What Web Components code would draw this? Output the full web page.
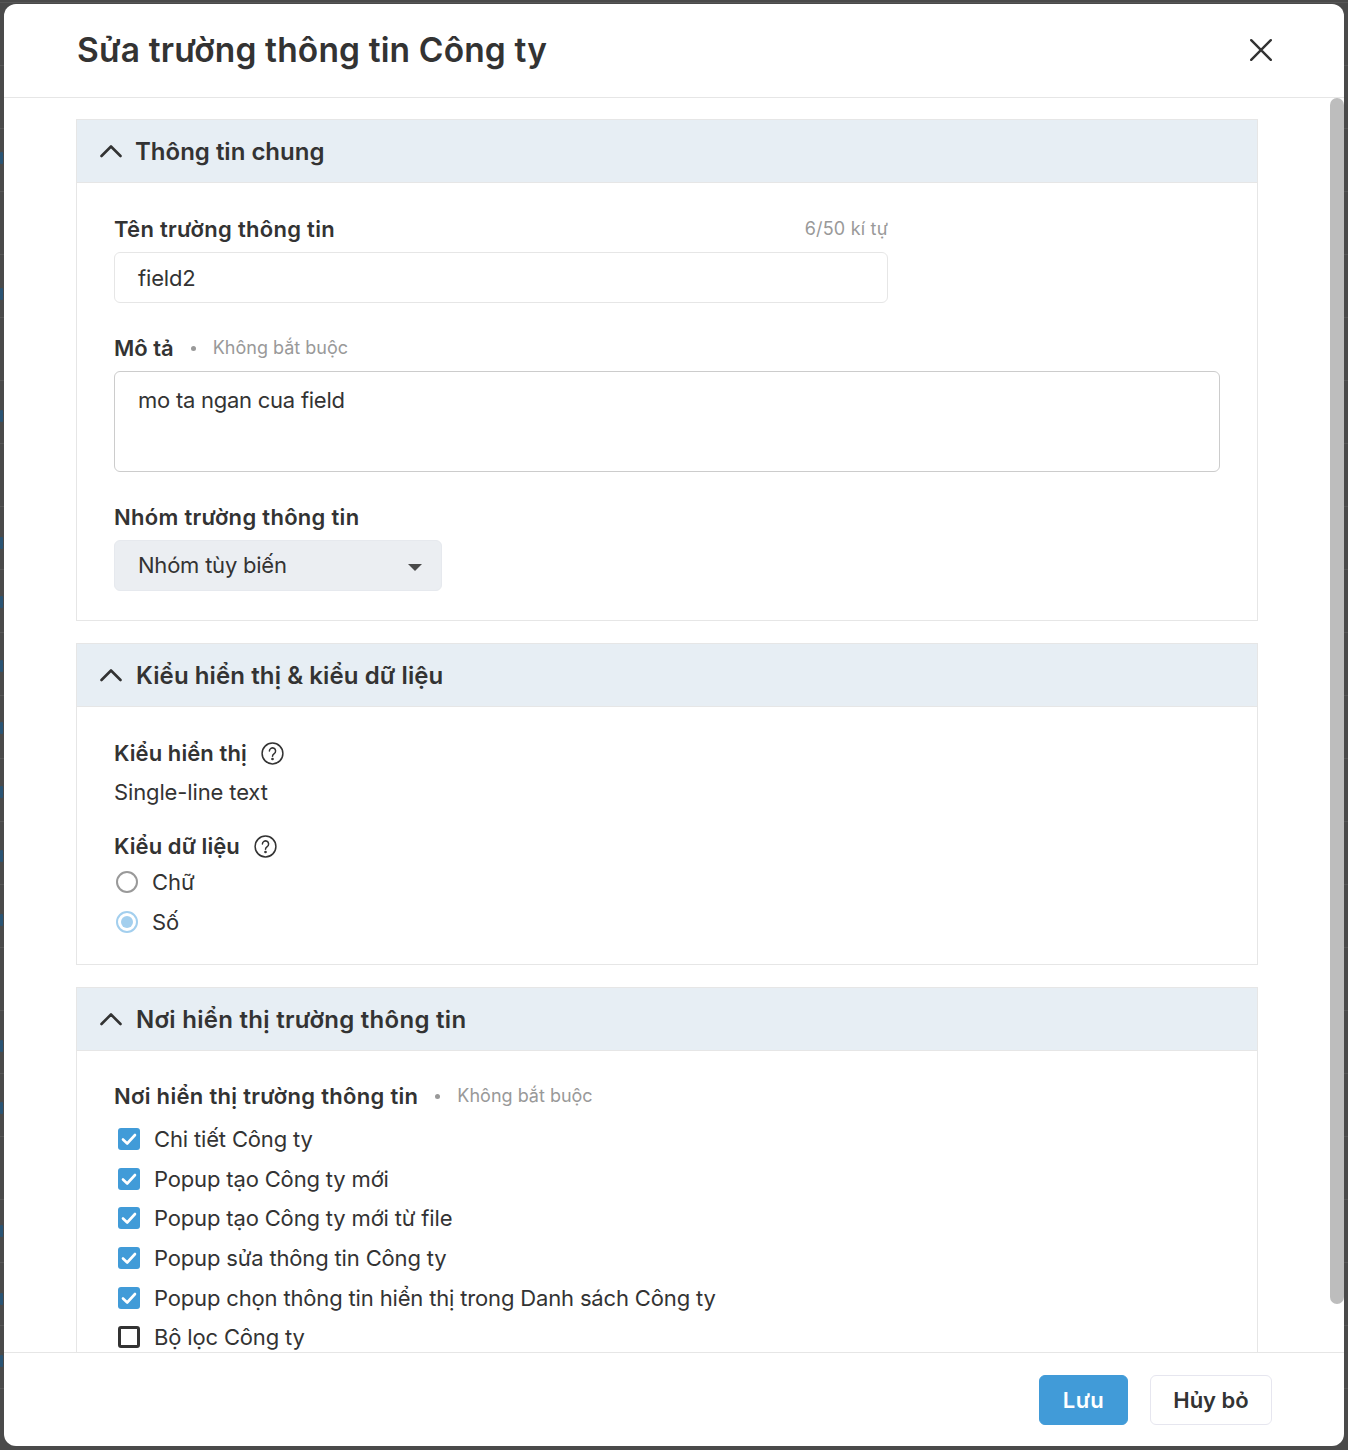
<!DOCTYPE html>
<html lang="vi">
<head>
<meta charset="utf-8">
<title>Sửa trường thông tin Công ty</title>
<style>
  html, body { margin: 0; height: 100%; }
  body { background: #4a4a4a linear-gradient(to bottom, transparent 2px, #575757 2px, #575757 3px, transparent 3px);
         background-size: 100% 63px; font-family: Inter, "Liberation Sans", sans-serif; color: #333; overflow: hidden; position: relative; }
</style>
</head>
<body>
<template id="t-backdrop">
  <style>
    :host { position: absolute; left: 0; top: 0; width: 4px; height: 1450px; }
    i { position: absolute; left: 0; width: 3px; background: #2a5474; border-radius: 1px; }
  </style>
  <slot></slot>
</template>

<template id="t-modal">
  <style>
    :host { display: flex; flex-direction: column; box-sizing: border-box; height: 1442px; width: 1340px; position: relative;
            margin: 4px; background: #fff; border-radius: 12px; overflow: hidden; }
    .head { flex: none; height: 94px; box-sizing: border-box; display: flex; align-items: center; justify-content: space-between;
            padding: 0 72px 2px 73px; border-bottom: 1px solid #e6e6e6; }
    h1 { margin: 0; font-size: 33.5px; font-weight: 600; color: #333; letter-spacing: .15px; }
    .body { flex: 1; min-height: 0; overflow: hidden; position: relative; padding: 21px 86px 0 72px; }
    .thumb { position: absolute; right: 0; top: 0; width: 14px; height: 1206px; background: #bdbdbd; border-radius: 7px; }
    .foot { flex: none; height: 93px; border-top: 1px solid #e6e6e6; display: flex; justify-content: flex-end;
            align-items: center; gap: 22px; padding: 0 72px; }
  </style>
  <div class="head">
    <h1><slot name="title"></slot></h1>
    <svg width="22" height="22" viewBox="0 0 22 22" fill="none" stroke="#333" stroke-width="2.4" stroke-linecap="round"><path d="M1.2 1.2 20.8 20.8M20.8 1.2 1.2 20.8"/></svg>
  </div>
  <div class="body"><slot></slot><div class="thumb"></div></div>
  <div class="foot"><slot name="foot"></slot></div>
</template>

<template id="t-section">
  <style>
    :host { display: block; box-sizing: border-box; border: 1px solid #e6e6e6; margin-bottom: 22px; }
    .head { height: 63px; box-sizing: border-box; background: #e7eef4; border-bottom: 1px solid #e6e6e6; display: flex; align-items: center;
            gap: 14px; padding-left: 23px; font-size: 24px; font-weight: 600; color: #333; }
    .panel { padding: 32px 37px 29px; }
  </style>
  <div class="head">
    <svg width="22" height="14" viewBox="0 0 22 14" fill="none" stroke="#333" stroke-width="2.6" stroke-linecap="round" stroke-linejoin="round"><path d="M1.5 12 11 2.5 20.5 12"/></svg>
    <slot name="heading"></slot>
  </div>
  <div class="panel"><slot></slot></div>
</template>

<template id="t-label">
  <style>
    :host { display: flex; align-items: center; font-size: 22px; font-weight: 600; color: #333; line-height: 28px; }
    .opt { display: none; font-size: 18px; font-weight: 400; color: #999; letter-spacing: 0; }
    :host([optional]) .opt { display: inline-flex; align-items: center; }
    .dot { width: 5px; height: 5px; border-radius: 50%; background: #999; margin: 0 17px 0 17px; }
    .count { margin-left: auto; font-size: 18px; font-weight: 400; color: #999; letter-spacing: .2px; }
    svg { display: none; margin-left: 14px; }
    :host([help]) svg { display: block; }
  </style>
  <slot></slot>
  <span class="opt"><span class="dot"></span>Không bắt buộc</span>
  <svg width="23" height="23" viewBox="0 0 23 23" fill="none" stroke="#333" stroke-width="1.5"><circle cx="11.5" cy="11.5" r="10.4"/><path d="M8.4 9a3.1 3.1 0 1 1 4.8 2.6c-1 .7-1.7 1.2-1.7 2.6" stroke-linecap="round"/><circle cx="11.5" cy="17" r=".6" fill="#333"/></svg>
  <span class="count"><slot name="count"></slot></span>
</template>

<template id="t-input">
  <style>
    :host { display: block; box-sizing: border-box; border: 1px solid #e6e6e6; border-radius: 6px; height: 51px;
            padding: 0 23px; font-size: 22px; line-height: 51px; color: #333; background: #fff; letter-spacing: -.15px; }
    :host([area]) { height: 101px; border-color: #ccc; line-height: 28px; padding-top: 14px; letter-spacing: -.25px; }
    :host([select]) { background: #ebeef2; border-color: #e6e9ee; display: flex; justify-content: space-between; align-items: center; padding-right: 19px; letter-spacing: -.22px; }
    svg { display: none; margin-top: 3px; }
    :host([select]) svg { display: block; }
  </style>
  <slot></slot>
  <svg width="14" height="7" viewBox="0 0 14 7"><path d="M0 0h14L7 7z" fill="#4a4a4a"/></svg>
</template>

<template id="t-radio">
  <style>
    :host { display: flex; align-items: center; gap: 14px; height: 40px; font-size: 22px; color: #333; padding-left: 2px; }
    .c { box-sizing: border-box; width: 22px; height: 22px; border-radius: 50%; border: 2px solid #999; display: flex; align-items: center; justify-content: center; }
    :host([checked]) .c { border-color: #a3cfee; }
    :host([checked]) .c::after { content: ""; width: 12px; height: 12px; border-radius: 50%; background: #a3cfee; }
  </style>
  <span class="c"></span><slot></slot>
</template>

<template id="t-check">
  <style>
    :host { display: flex; align-items: center; gap: 14px; height: 39.6px; font-size: 22px; color: #333; padding-left: 4px; letter-spacing: -.16px; }
    .b { box-sizing: border-box; width: 22px; height: 22px; border-radius: 3px; border: 3px solid #333; display: block; }
    :host([checked]) .b { border: 0; background: #419bd8; }
    svg { display: none; }
    :host([checked]) svg { display: block; }
  </style>
  <span class="b"><svg width="22" height="22" viewBox="0 0 22 22" fill="none" stroke="#fff" stroke-width="2.6" stroke-linecap="round" stroke-linejoin="round"><path d="M5 11.5 9.2 15.5 17 7"/></svg></span><slot></slot>
</template>

<template id="t-button">
  <style>
    :host { display: flex; align-items: center; justify-content: center; box-sizing: border-box; height: 50px; border-radius: 6px;
            font-size: 22px; font-weight: 600; border: 1px solid #e6e6ef; color: #333; background: #fff; }
    :host([primary]) { background: #419bd8; border-color: #419bd8; color: #fff; letter-spacing: .5px; }
  </style>
  <slot></slot>
</template>

<x-backdrop></x-backdrop>

<x-modal>
  <span slot="title">Sửa trường thông tin Công ty</span>

  <x-section>
    <span slot="heading" style="margin-left:-1px">Thông tin chung</span>
    <x-label style="width:774px;margin-bottom:9px;letter-spacing:.3px">Tên trường thông tin<span slot="count">6/50 kí tự</span></x-label>
    <x-input style="width:774px">field2</x-input>
    <x-label optional style="margin:31px 0 9px">Mô tả</x-label>
    <x-input area>mo ta ngan cua field</x-input>
    <x-label style="margin:31px 0 9px;letter-spacing:.3px">Nhóm trường thông tin</x-label>
    <x-input select style="width:328px">Nhóm tùy biến</x-input>
  </x-section>

  <x-section>
    <span slot="heading" style="letter-spacing:.1px">Kiểu hiển thị &amp; kiểu dữ liệu</span>
    <x-label help style="letter-spacing:.08px">Kiểu hiển thị</x-label>
    <div style="font-size:22px;line-height:28px;margin:11px 0 26px;color:#333;letter-spacing:-.13px">Single-line text</div>
    <x-label help style="margin-bottom:2px;letter-spacing:.08px">Kiểu dữ liệu</x-label>
    <x-radio>Chữ</x-radio>
    <x-radio checked style="margin-bottom:-7px">Số</x-radio>
  </x-section>

  <x-section>
    <span slot="heading" style="letter-spacing:.28px">Nơi hiển thị trường thông tin</span>
    <x-label optional style="margin:-1px 0 9.4px;letter-spacing:.31px">Nơi hiển thị trường thông tin</x-label>
    <x-check checked>Chi tiết Công ty</x-check>
    <x-check checked>Popup tạo Công ty mới</x-check>
    <x-check checked>Popup tạo Công ty mới từ file</x-check>
    <x-check checked>Popup sửa thông tin Công ty</x-check>
    <x-check checked>Popup chọn thông tin hiển thị trong Danh sách Công ty</x-check>
    <x-check>Bộ lọc Công ty</x-check>
  </x-section>

  <x-button slot="foot" primary style="width:89px">Lưu</x-button>
  <x-button slot="foot" style="width:122px">Hủy bỏ</x-button>
</x-modal>

<script>
  // every element just clones its own template into an open shadow root
  for (const name of ["backdrop", "modal", "section", "label", "input", "radio", "check", "button"]) {
    customElements.define("x-" + name, class extends HTMLElement {
      constructor() {
        super();
        this.attachShadow({ mode: "open" })
          .appendChild(document.getElementById("t-" + name).content.cloneNode(true));
      }
    });
  }

  // bits of the page behind the dialog that stick out on the left edge
  const back = document.querySelector("x-backdrop").shadowRoot;
  for (const y of [152, 288, 410, 537, 596, 660, 722, 786, 850, 914, 1040, 1102, 1225, 1293, 1355]) {
    const mark = document.createElement("i");
    mark.style.cssText = `top:${y}px;height:12px`;
    back.appendChild(mark);
  }
</script>
</body>
</html>
